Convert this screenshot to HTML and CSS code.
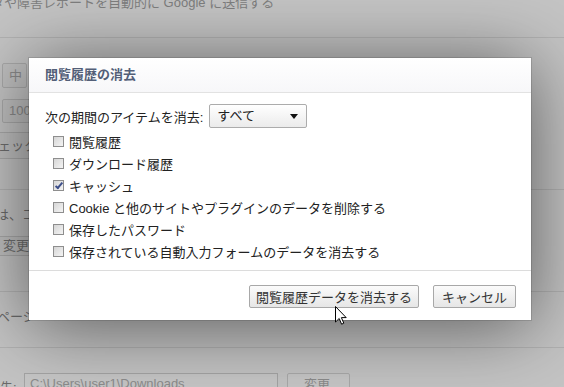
FILE: index.html
```html
<!DOCTYPE html>
<html lang="ja">
<head>
    <meta charset="UTF-8">
    <title>閲覧履歴の消去</title>
    <link rel="stylesheet" href="styles.css">
</head>
<body>
    <div class="page">
        <div class="intro">データや障害レポートを自動的に Google に送信する</div>
        <hr class="rule first">
        <div class="field small">中</div>
        <div class="field wide">100%</div>
        <div class="field btnlike">スペルチェックの設定</div>
        <hr class="rule after-spell">
        <div class="note">は、コンテンツの設定</div>
        <div class="field change">変更...</div>
        <hr class="rule after-change">
        <div class="note page-note">ページ</div>
        <hr class="rule">
        <div class="download">
            <span class="dl-label">先:</span>
            <span class="path">C:\Users\user1\Downloads</span>
            <span class="field dl-btn">変更...</span>
        </div>
    </div>

    <div class="dialog">
        <div class="dialog-head">閲覧履歴の消去</div>
        <div class="dialog-body">
            <div class="period">
                <span>次の期間のアイテムを消去:</span>
                <div class="select">すべて<span class="arrow"></span></div>
            </div>
            <ul class="items">
                <li><span class="box"></span>閲覧履歴</li>
                <li><span class="box"></span>ダウンロード履歴</li>
                <li><span class="box checked"></span>キャッシュ</li>
                <li><span class="box"></span>Cookie と他のサイトやプラグインのデータを削除する</li>
                <li><span class="box"></span>保存したパスワード</li>
                <li><span class="box"></span>保存されている自動入力フォームのデータを消去する</li>
            </ul>
        </div>
        <div class="dialog-foot">
            <button class="btn primary">閲覧履歴データを消去する</button>
            <button class="btn">キャンセル</button>
        </div>
    </div>

    <svg class="cursor" width="13" height="20" viewBox="0 0 13 20">
        <path d="M0.5 0.5 L0.5 16 L4.2 12.5 L6.6 18.2 L8.8 17.2 L6.4 11.6 L11.2 11.6 Z" fill="#fff" stroke="#000" stroke-width="1"/>
    </svg>
</body>
</html>
```

FILE: styles.css
```css
body {
    margin: 0;
    width: 564px;
    height: 387px;
    overflow: hidden;
    position: relative;
    background: #c4c4c4;
    font-family: "Liberation Sans", "Noto Sans CJK JP", sans-serif;
    font-size: 13px;
}
.page {
    color: #7e7e7e;
}
.intro {
    margin: -6px 0 0 -35px;
    height: 18px;
    line-height: 18px;
    white-space: nowrap;
}
.rule {
    border: none;
    border-top: 1px solid #b2b2b2;
    margin: 0;
}
.rule.first {
    margin-top: 25px;
}
.rule.after-spell {
    margin-top: 30px;
}
.rule.after-change {
    margin-top: 35px;
}
.field {
    box-sizing: border-box;
    border: 1px solid #a9a9a9;
    border-radius: 2px;
    background: #c0c0c0;
    color: #8a8a8a;
    padding-left: 6px;
    white-space: nowrap;
    overflow: hidden;
}
.field.small {
    margin: 25px 0 0 2px;
    width: 25px;
    height: 25px;
    line-height: 23px;
}
.field.wide {
    margin: 11px 0 0 2px;
    width: 80px;
    height: 24px;
    line-height: 22px;
}
.field.btnlike {
    margin: 9px 0 0 -60px;
    width: 150px;
    height: 27px;
    line-height: 25px;
    color: #6e6e6e;
}
.note {
    margin: 16px 0 0 -4px;
    height: 18px;
    line-height: 18px;
    color: #6a6a6a;
    white-space: nowrap;
}
.field.change {
    margin: 12px 0 0 -4px;
    width: 70px;
    height: 20px;
    line-height: 18px;
    color: #707070;
}
.note.page-note {
    margin-left: -3px;
    margin-bottom: 21px;
}
.download {
    margin-top: 25px;
    display: flex;
    align-items: flex-start;
    white-space: nowrap;
}
.dl-label {
    width: 24px;
    margin-left: -10px;
    padding-left: 10px;
    margin-top: 4px;
    color: #6a6a6a;
}
.path {
    box-sizing: border-box;
    width: 254px;
    height: 22px;
    line-height: 20px;
    border: 1px solid #a4a4a4;
    background: #c6c6c6;
    padding-left: 5px;
    color: #8c8c8c;
}
.field.dl-btn {
    margin-left: 9px;
    width: 63px;
    height: 24px;
    line-height: 22px;
    padding-left: 16px;
    background: #c6c6c6;
}

/* dialog */
.dialog {
    position: absolute;
    left: 29px;
    top: 58px;
    width: 502px;
    background: #fff;
    box-shadow: 0 6px 70px rgba(0, 0, 0, 0.55), 0 0 0 1px rgba(0, 0, 0, 0.12);
    color: #222;
}
.dialog-head {
    height: 34px;
    line-height: 34px;
    padding-left: 16px;
    border-bottom: 1px solid #e2e2e2;
    background: linear-gradient(#ffffff, #f7f7f9);
    color: #535f78;
    font-weight: bold;
}
.dialog-body {
    padding: 11px 16px 8px;
}
.period {
    display: flex;
    align-items: center;
    height: 24px;
    gap: 6px;
}
.select {
    box-sizing: border-box;
    width: 98px;
    height: 24px;
    line-height: 22px;
    border: 1px solid #acacac;
    border-radius: 2px;
    background: linear-gradient(#ffffff, #ebebeb);
    padding-left: 7px;
    position: relative;
}
.arrow {
    position: absolute;
    right: 8px;
    top: 9px;
    border-left: 4px solid transparent;
    border-right: 4px solid transparent;
    border-top: 5px solid #111;
}
.items {
    list-style: none;
    margin: 2px 0 0 8px;
    padding: 0;
}
.items li {
    height: 22px;
    display: flex;
    align-items: center;
    white-space: nowrap;
}
.box {
    box-sizing: border-box;
    width: 11px;
    height: 11px;
    border: 1px solid #8e8e8e;
    background: linear-gradient(135deg, #d6d6d6, #f4f4f4);
    margin-right: 5px;
    position: relative;
}
.box.checked::after {
    content: "";
    position: absolute;
    left: 3px;
    top: 0px;
    width: 2px;
    height: 6px;
    border-right: 2px solid #3d4f8a;
    border-bottom: 2px solid #3d4f8a;
    transform: rotate(40deg);
}
.dialog-foot {
    border-top: 1px solid #dcdcdc;
    padding: 14px 15px 12px;
    display: flex;
    justify-content: flex-end;
    gap: 14px;
}
.btn {
    height: 23px;
    font: inherit;
    color: #333;
    border: 1px solid #a8a8a8;
    border-radius: 2px;
    background: linear-gradient(#fbfbfb, #e6e6e6);
    padding: 0;
}
.btn.primary {
    width: 170px;
}
.btn + .btn {
    width: 83px;
}
.cursor {
    position: absolute;
    left: 335px;
    top: 306px;
}
```
